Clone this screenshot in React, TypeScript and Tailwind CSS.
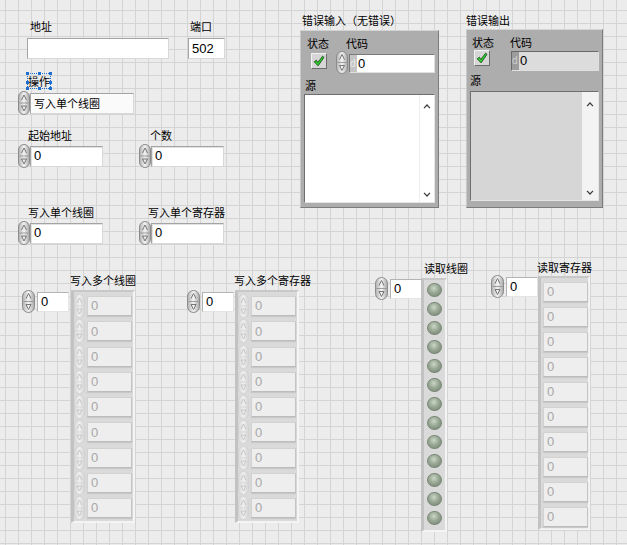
import React from 'react'

// ── fonts ────────────────────────────────────────────
const CJK = "font-['Noto_Sans_CJK_SC','Noto_Sans',sans-serif] text-[11px] leading-[16px] text-black whitespace-nowrap"
const NUM = "font-['Liberation_Sans','Noto_Sans',sans-serif] text-[13px]"

// ── spinner (increment / decrement) ──────────────────
function Spin({ w = 12, h = 24, dim = false }: { w?: number; h?: number; dim?: boolean }) {
  const edge = dim ? '#d2d2d2' : '#8c8c8c'
  const arrow = dim ? '#c2c2c2' : '#6a6a6a'
  const mid = h / 2
  const cx = w / 2
  return (
    <svg width={w} height={h} viewBox={`0 0 ${w} ${h}`} className="block shrink-0">
      <defs>
        <linearGradient id="spn" x1="0" x2="1" y1="0" y2="0">
          <stop offset="0" stopColor="#b0b0b0" />
          <stop offset="0.5" stopColor="#f4f4f4" />
          <stop offset="1" stopColor="#a6a6a6" />
        </linearGradient>
        <linearGradient id="spd" x1="0" x2="1" y1="0" y2="0">
          <stop offset="0" stopColor="#d8d8d8" />
          <stop offset="0.5" stopColor="#efefef" />
          <stop offset="1" stopColor="#d4d4d4" />
        </linearGradient>
      </defs>
      <rect x="0.5" y="0.5" width={w - 1} height={h - 1} rx={(w - 1) / 2} fill={dim ? 'url(#spd)' : 'url(#spn)'} stroke={edge} />
      <line x1="1.5" y1={mid} x2={w - 1.5} y2={mid} stroke={edge} strokeWidth="0.8" />
      <path d={`M${cx - 2.5} ${mid - 3} L${cx} ${mid - 8} L${cx + 2.5} ${mid - 3}`} fill="none" stroke={arrow} strokeWidth="0.9" />
      <path d={`M${cx - 2.5} ${mid + 3} L${cx + 2.5} ${mid + 3} L${cx} ${mid + 8} Z`} fill="none" stroke={arrow} strokeWidth="0.9" />
    </svg>
  )
}

// ── green check box (error status) ───────────────────
function Check() {
  return (
    <div className="w-[16px] h-[16px] bg-[#d6d6d6] border border-t-[#f2f2f2] border-l-[#f2f2f2] border-r-[#6c6c6c] border-b-[#6c6c6c] flex items-center justify-center">
      <svg width="12" height="12" viewBox="0 0 12 12">
        <path d="M1.2 6.8 L3.4 5.2 L4.9 7.4 L9.6 1.2 L11 2.4 L5.1 10.8 Z" fill="#2fd42f" stroke="#0c3a0c" strokeWidth="0.8" strokeLinejoin="round" />
      </svg>
    </div>
  )
}

function Chevron({ up }: { up?: boolean }) {
  return (
    <svg width="8" height="5" viewBox="0 0 8 5" className="block">
      <path d={up ? 'M1 4.2 L4 1 L7 4.2' : 'M1 0.8 L4 4 L7 0.8'} fill="none" stroke="#3c3c3c" strokeWidth="1.2" />
    </svg>
  )
}

// ── numeric control: label + spinner + box ───────────
function NumCtl({ label, labelClass, boxClass, text = '0', font = NUM }: { label: string; labelClass: string; boxClass: string; text?: string; font?: string }) {
  return (
    <div className="flex flex-col">
      <div className={`${CJK} ${labelClass}`}>{label}</div>
      <div className="flex items-center">
        <Spin />
        <div className={`flex items-center pl-[3px] h-[21px] bg-white border border-t-[#a4a4a4] border-l-[#a4a4a4] border-r-[#d8d8d8] border-b-[#d8d8d8] shadow-[inset_1px_1px_0_#e2e2e2] ${font} ${boxClass}`}>{text}</div>
      </div>
    </div>
  )
}

// ── index box of an array ────────────────────────────
function IndexCtl() {
  return (
    <div className="flex items-center gap-[2px]">
      <Spin w={13} h={23} />
      <div className={`w-[32px] h-[20px] flex items-center pl-[3px] bg-white border border-t-[#b4b4b4] border-l-[#b4b4b4] border-r-[#e4e4e4] border-b-[#e4e4e4] ${NUM} text-black`}>0</div>
    </div>
  )
}

const FRAME = 'bg-[#dadada] border-l-[3px] border-t-[2px] border-l-[#c2c2c2] border-t-[#c8c8c8] border-r-[2px] border-b-[2px] border-r-[#f4f4f4] border-b-[#f4f4f4]'
const ELEM = `w-[45px] h-[20px] flex items-center pl-[3px] bg-[#eeeeee] border border-t-[#d2d2d2] border-l-[#d2d2d2] border-r-[#c4c4c4] border-b-[#bcbcbc] shadow-[0_1px_1px_#c8c8c8] text-[#a8a8a8] ${NUM}`

function WriteArray({ count }: { count: number }) {
  return (
    <div className={`${FRAME} w-[64px] h-[233px] flex flex-col gap-[5.25px] pt-[4px]`}>
      {Array.from({ length: count }).map((_, i) => (
        <div key={i} className="flex items-center gap-[2px] h-[20px]">
          <Spin w={11} h={24} dim />
          <div className={ELEM}>0</div>
        </div>
      ))}
    </div>
  )
}

function ReadRegisters() {
  return (
    <div className={`${FRAME} w-[52px] h-[254px] flex flex-col gap-[5px] pt-[4px] pl-[2px]`}>
      {Array.from({ length: 10 }).map((_, i) => (
        <div key={i} className={ELEM}>0</div>
      ))}
    </div>
  )
}

function ReadCoils() {
  return (
    <div className={`${FRAME} w-[26px] h-[254px] flex flex-col items-center gap-[5px] pt-[3px] pr-[1px]`}>
      {Array.from({ length: 13 }).map((_, i) => (
        <div key={i} className="w-[15px] h-[14px] shrink-0 rounded-full border border-[#7d8a7a] bg-[radial-gradient(circle_at_45%_35%,#cbd6c6_0%,#98a894_45%,#6f7e6b_100%)]" />
      ))}
    </div>
  )
}

// ── selection handles around "操作" ──────────────────
function Handles() {
  const sq = 'absolute w-[3px] h-[3px] bg-[#1f6fd1]'
  return (
    <>
      <div className="absolute inset-0 border border-dotted border-[#1f6fd1]" />
      <div className={`${sq} -left-[1px] -top-[1px]`} />
      <div className={`${sq} left-[11px] -top-[1px]`} />
      <div className={`${sq} -right-[1px] -top-[1px]`} />
      <div className={`${sq} -left-[1px] -bottom-[1px]`} />
      <div className={`${sq} left-[11px] -bottom-[1px]`} />
      <div className={`${sq} -right-[1px] -bottom-[1px]`} />
      <div className={`${sq} -left-[1px] top-[8px]`} />
      <div className={`${sq} -right-[1px] top-[8px]`} />
    </>
  )
}

export default function App() {
  return (
    <div className="relative w-[627px] h-[545px] overflow-hidden bg-[#ececec] bg-[linear-gradient(to_right,#d4d4d4_1px,transparent_1px),linear-gradient(to_bottom,#d4d4d4_1px,transparent_1px)] bg-[size:13px_13px] bg-[position:5px_10px]">

      {/* ── 地址 / 端口 ── */}
      <div className="absolute left-[27px] top-[18px] flex flex-col gap-[4px]">
        <div className={`${CJK} ml-[3px]`}>地址</div>
        <div className="w-[142px] h-[21px] bg-white border border-t-[#a4a4a4] border-l-[#a4a4a4] border-r-[#d8d8d8] border-b-[#d8d8d8]" />
      </div>
      <div className="absolute left-[188px] top-[18px] flex flex-col gap-[4px]">
        <div className={`${CJK} ml-[2px]`}>端口</div>
        <div className={`w-[37px] h-[21px] flex items-center pl-[3px] bg-white border border-t-[#a4a4a4] border-l-[#a4a4a4] border-r-[#d8d8d8] border-b-[#d8d8d8] ${NUM} text-black`}>502</div>
      </div>

      {/* ── 操作 (ring) ── */}
      <div className="absolute left-[18px] top-[73px] flex flex-col">
        <div className="relative self-start ml-[9px] px-[1px] mb-[2px]">
          <div className={CJK}>操作</div>
          <Handles />
        </div>
        <div className="flex items-center">
          <Spin />
          <div className={`w-[104px] h-[21px] flex items-center pl-[3px] bg-[#fafafa] border border-t-[#a4a4a4] border-l-[#a4a4a4] border-r-[#d8d8d8] border-b-[#d8d8d8] ${CJK}`}>写入单个线圈</div>
        </div>
      </div>

      {/* ── numeric controls ── */}
      <div className="absolute left-[18px] top-[127px]">
        <NumCtl label="起始地址" labelClass="ml-[10px] mb-[1px]" boxClass="w-[73px] text-black" />
      </div>
      <div className="absolute left-[139px] top-[127px]">
        <NumCtl label="个数" labelClass="ml-[11px] mb-[1px]" boxClass="w-[73px] text-black" />
      </div>
      <div className="absolute left-[18px] top-[204px]">
        <NumCtl label="写入单个线圈" labelClass="ml-[10px] mb-[1px]" boxClass="w-[73px] text-black" />
      </div>
      <div className="absolute left-[139px] top-[204px]">
        <NumCtl label="写入单个寄存器" labelClass="ml-[9px] mb-[1px]" boxClass="w-[73px] text-black" />
      </div>

      {/* ── 错误输入 ── */}
      <div className={`absolute left-[302px] top-[12px] ${CJK}`}>错误输入（无错误）</div>
      <div className="absolute left-[300px] top-[30px] w-[139px] h-[178px] bg-[#adadad] border border-t-[#d4d4d4] border-l-[#c8c8c8] border-r-[#7c7c7c] border-b-[#7c7c7c] flex flex-col">
        <div className="flex pl-[6px] pt-[4px] gap-[17px]">
          <div className={CJK}>状态</div>
          <div className={CJK}>代码</div>
        </div>
        <div className="flex items-start pl-[10px] h-[24px]">
          <div className="mt-[2px]"><Check /></div>
          <div className="ml-[9px]"><Spin h={23} /></div>
          <div className="ml-[1px] mt-[3px] w-[86px] h-[19px] flex border border-t-[#7a7a7a] border-l-[#7a7a7a] border-r-[#e0e0e0] border-b-[#e0e0e0]">
            <div className="w-[7px] bg-[#c4c4c4] text-[#e8e8e8] text-[10px] leading-[17px] font-['Liberation_Sans',sans-serif] overflow-hidden">d</div>
            <div className={`flex-1 bg-white flex items-center pl-[1px] ${NUM} text-black`}>0</div>
          </div>
        </div>
        <div className={`${CJK} pl-[4px] mt-[2px]`}>源</div>
        <div className="mx-[3px] mt-[1px] h-[109px] bg-white border border-t-[#6e6e6e] border-l-[#6e6e6e] border-r-[#e6e6e6] border-b-[#e6e6e6] flex justify-end">
          <div className="w-[15px] border-l border-[#ededed] flex flex-col items-center justify-between pt-[9px] pb-[5px]">
            <Chevron up />
            <Chevron />
          </div>
        </div>
      </div>

      {/* ── 错误输出 ── */}
      <div className={`absolute left-[466px] top-[12px] ${CJK}`}>错误输出</div>
      <div className="absolute left-[466px] top-[29px] w-[137px] h-[179px] bg-[#adadad] border border-t-[#d4d4d4] border-l-[#c8c8c8] border-r-[#7c7c7c] border-b-[#7c7c7c] flex flex-col">
        <div className="flex pl-[5px] pt-[4px] gap-[16px]">
          <div className={CJK}>状态</div>
          <div className={CJK}>代码</div>
        </div>
        <div className="flex items-start pl-[7px] h-[24px]">
          <div><Check /></div>
          <div className="ml-[21px] mt-[1px] w-[88px] h-[20px] flex border border-t-[#6a6a6a] border-l-[#6a6a6a] border-r-[#e0e0e0] border-b-[#e0e0e0]">
            <div className="w-[7px] bg-[#9c9c9c] text-[#cfcfcf] text-[10px] leading-[18px] font-['Liberation_Sans',sans-serif] overflow-hidden">d</div>
            <div className={`flex-1 bg-[#dcdcdc] flex items-center pl-[1px] ${NUM} text-black`}>0</div>
          </div>
        </div>
        <div className={`${CJK} pl-[3px] mt-[-2px]`}>源</div>
        <div className="mx-[3px] mt-[3px] h-[110px] bg-[#d6d6d6] border border-t-[#6e6e6e] border-l-[#6e6e6e] border-r-[#e6e6e6] border-b-[#e6e6e6] flex justify-end">
          <div className="w-[16px] bg-[#f3f3f3] flex flex-col items-center justify-between pt-[10px] pb-[5px]">
            <Chevron up />
            <Chevron />
          </div>
        </div>
      </div>

      {/* ── 写入多个线圈 ── */}
      <div className={`absolute left-[70px] top-[272px] ${CJK}`}>写入多个线圈</div>
      <div className="absolute left-[22px] top-[290px]"><IndexCtl /></div>
      <div className="absolute left-[71px] top-[290px]"><WriteArray count={9} /></div>

      {/* ── 写入多个寄存器 ── */}
      <div className={`absolute left-[234px] top-[272px] ${CJK}`}>写入多个寄存器</div>
      <div className="absolute left-[187px] top-[290px]"><IndexCtl /></div>
      <div className="absolute left-[235px] top-[290px]"><WriteArray count={9} /></div>

      {/* ── 读取线圈 ── */}
      <div className={`absolute left-[424px] top-[260px] ${CJK}`}>读取线圈</div>
      <div className="absolute left-[375px] top-[277px]"><IndexCtl /></div>
      <div className="absolute left-[421px] top-[278px]"><ReadCoils /></div>

      {/* ── 读取寄存器 ── */}
      <div className={`absolute left-[537px] top-[259px] ${CJK}`}>读取寄存器</div>
      <div className="absolute left-[491px] top-[275px]"><IndexCtl /></div>
      <div className="absolute left-[538px] top-[276px]"><ReadRegisters /></div>
    </div>
  )
}
